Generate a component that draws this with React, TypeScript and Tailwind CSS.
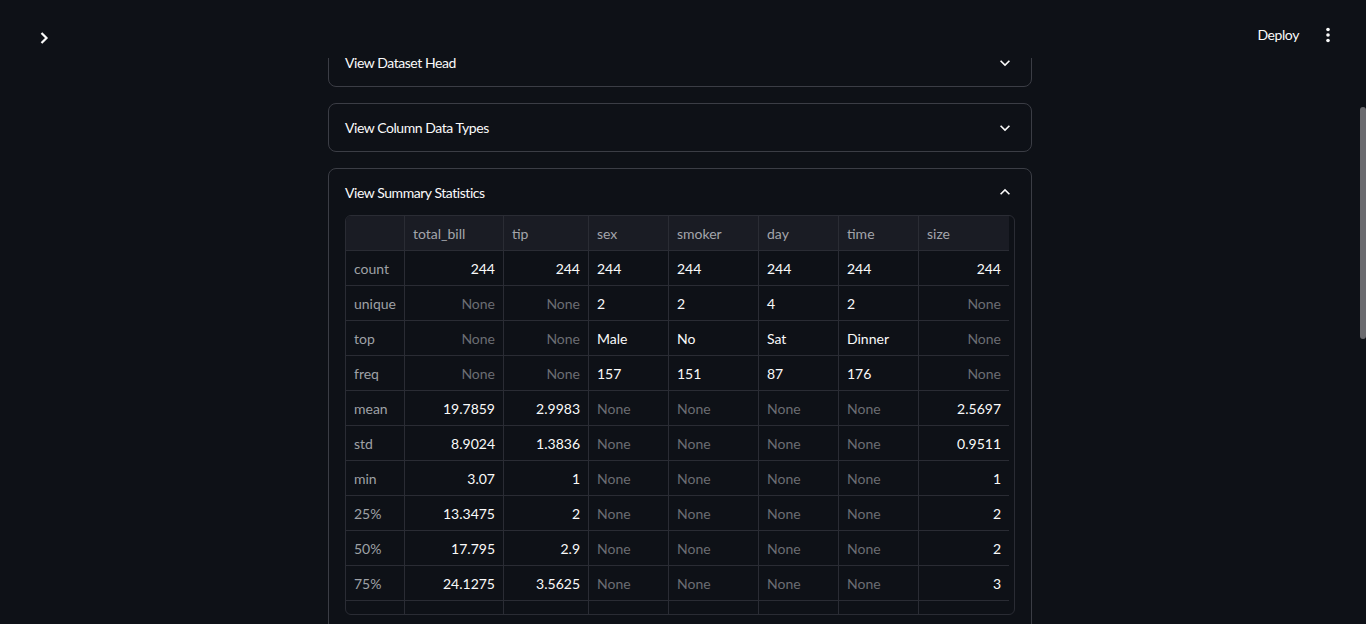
import React from "react";

const cols = ["total_bill", "tip", "sex", "smoker", "day", "time", "size"];
const numeric = [true, true, false, false, false, false, true];
const rows: [string, string[]][] = [
  ["count", ["244", "244", "244", "244", "244", "244", "244"]],
  ["unique", ["None", "None", "2", "2", "4", "2", "None"]],
  ["top", ["None", "None", "Male", "No", "Sat", "Dinner", "None"]],
  ["freq", ["None", "None", "157", "151", "87", "176", "None"]],
  ["mean", ["19.7859", "2.9983", "None", "None", "None", "None", "2.5697"]],
  ["std", ["8.9024", "1.3836", "None", "None", "None", "None", "0.9511"]],
  ["min", ["3.07", "1", "None", "None", "None", "None", "1"]],
  ["25%", ["13.3475", "2", "None", "None", "None", "None", "2"]],
  ["50%", ["17.795", "2.9", "None", "None", "None", "None", "2"]],
  ["75%", ["24.1275", "3.5625", "None", "None", "None", "None", "3"]],
  ["", ["", "", "", "", "", "", ""]],
];

function Chevron({ up }: { up?: boolean }) {
  return (
    <svg width="20" height="20" viewBox="0 0 24 24" fill="#fafafa" className={up ? "rotate-180" : ""}>
      <path d="M16.59 8.59L12 13.17 7.41 8.59 6 10l6 6 6-6z" />
    </svg>
  );
}

function Summary({ title, up, h }: { title: string; up?: boolean; h?: string }) {
  return (
    <div className={`${h ?? "h-[47px]"} flex items-center justify-between pl-4 pr-4`}>
      <span className="text-[14px] tracking-[-0.45px] text-[#fafafa]">{title}</span>
      <Chevron up={up} />
    </div>
  );
}

export default function App() {
  const grid = "grid grid-cols-[59px_99px_85px_80px_90px_80px_80px_90px] w-[663px]";
  return (
    <div
      className="relative w-[1366px] h-[624px] overflow-hidden bg-[#0e1117] flex"
      style={{ fontFamily: '"Source Sans Pro", Lato, "Noto Sans", sans-serif' }}
    >
      <div className="flex-1 flex justify-center pt-[38px]">
        <div className="w-[704px] flex flex-col gap-4">
          <div className="border border-[#3b3d45] rounded-lg">
            <Summary title="View Dataset Head" />
          </div>
          <div className="border border-[#3b3d45] rounded-lg">
            <Summary title="View Column Data Types" />
          </div>
          <div className="border border-[#3b3d45] rounded-lg px-4 pb-4">
            <div className="-mx-4">
              <Summary title="View Summary Statistics" up h="h-[46px]" />
            </div>
            <div className="h-[400px] border border-[#2a2c34] rounded-md overflow-hidden">
              <div className={grid}>
                <div className="h-[35px] bg-[#1a1c24] border-r border-b border-[#2a2c34]" />
                {cols.map((c, i) => (
                  <div
                    key={c}
                    className={`h-[35px] bg-[#1a1c24] border-b border-[#2a2c34] flex items-center px-2 text-[14px] text-[#a3a5ab] ${
                      i < cols.length - 1 ? "border-r" : ""
                    }`}
                  >
                    {c}
                  </div>
                ))}
                {rows.map(([label, vals], ri) => (
                  <React.Fragment key={ri}>
                    <div className="h-[35px] border-r border-b border-[#2a2c34] flex items-center px-2 text-[14px] text-[#9fa1a6]">
                      {label}
                    </div>
                    {vals.map((v, i) => (
                      <div
                        key={i}
                        className={`h-[35px] border-b border-[#2a2c34] flex items-center px-2 text-[14px] ${
                          i < vals.length - 1 ? "border-r" : ""
                        } ${numeric[i] ? "justify-end" : "justify-start"} ${
                          v === "None" ? "text-[#6b6d73]" : "text-[#fafafa]"
                        }`}
                      >
                        {v}
                      </div>
                    ))}
                  </React.Fragment>
                ))}
              </div>
            </div>
          </div>
        </div>
      </div>
      <div className="w-[6px] flex flex-col">
        <div className="mt-[107px] h-[232px] rounded-full bg-[#6a6a6e]" />
      </div>

      <div className="absolute top-0 left-0 right-0 h-[58px] bg-[#0e1117] flex items-start justify-between">
        <div className="pl-[36px] pt-[28px]">
          <svg width="18" height="20" viewBox="0 0 18 20">
            <path d="M5.5 5 L10.5 10 L5.5 15" stroke="#fafafa" strokeWidth="2.2" fill="none" />
          </svg>
        </div>
        <div className="flex items-center pt-[24px] pr-[28px] gap-[19px]">
          <span className="text-[14px] tracking-[-0.4px] text-[#fafafa]">Deploy</span>
          <svg width="20" height="20" viewBox="0 0 20 20" fill="#fafafa">
            <circle cx="10" cy="4.5" r="1.8" />
            <circle cx="10" cy="10" r="1.8" />
            <circle cx="10" cy="15.5" r="1.8" />
          </svg>
        </div>
      </div>
    </div>
  );
}
